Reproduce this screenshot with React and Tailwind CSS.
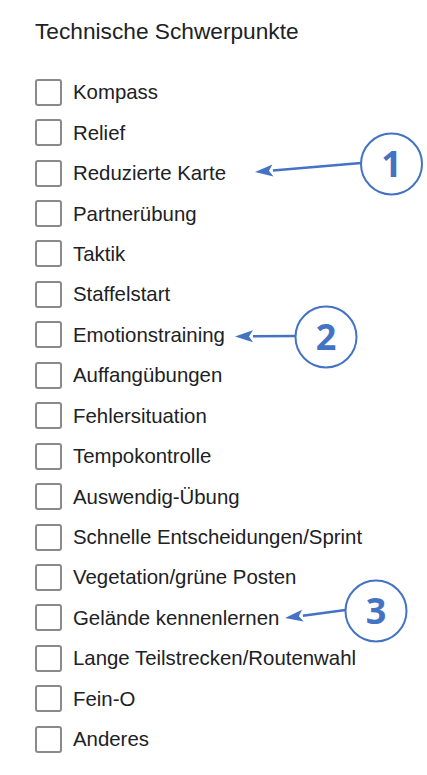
import React from "react";

const items = [
  "Kompass",
  "Relief",
  "Reduzierte Karte",
  "Partnerübung",
  "Taktik",
  "Staffelstart",
  "Emotionstraining",
  "Auffangübungen",
  "Fehlersituation",
  "Tempokontrolle",
  "Auswendig-Übung",
  "Schnelle Entscheidungen/Sprint",
  "Vegetation/grüne Posten",
  "Gelände kennenlernen",
  "Lange Teilstrecken/Routenwahl",
  "Fein-O",
  "Anderes",
];

function Callout({ cx, cy, tx, ty, label }) {
  const r = 30.5;
  const sx = cx - r;
  const sy = cy - 1;
  const dx = tx - sx;
  const dy = ty - sy;
  const len = Math.sqrt(dx * dx + dy * dy);
  const ux = dx / len;
  const uy = dy / len;
  const hl = 18;
  const hw = 6;
  const bx = tx - ux * hl;
  const by = ty - uy * hl;
  const px = -uy;
  const py = ux;
  return (
    <g>
      <line x1={sx} y1={sy} x2={bx} y2={by} stroke="#4472C4" strokeWidth="2.5" />
      <polygon
        points={`${tx},${ty} ${bx + px * hw},${by + py * hw} ${bx + ux * 4},${by + uy * 4} ${bx - px * hw},${by - py * hw}`}
        fill="#4472C4"
      />
      <circle cx={cx} cy={cy} r={r} fill="white" stroke="#4472C4" strokeWidth="2" />
      <text
        x={cx}
        y={cy + 13}
        textAnchor="middle"
        fill="#4472C4"
        fontFamily="'Open Sans', 'Liberation Sans', sans-serif"
        fontWeight="700"
        fontSize="36"
      >
        {label}
      </text>
    </g>
  );
}

export default function App() {
  return (
    <div className="relative w-[427px] h-[775px] bg-white overflow-hidden" style={{ fontFamily: "'Liberation Sans', Arial, sans-serif" }}>
      <div className="pl-[35px]">
        <div className="h-[72px] pt-[19px] text-[22.7px] leading-[24px] text-[#202124]">
          Technische Schwerpunkte
        </div>
        <div className="flex flex-col">
          {items.map((t) => (
            <div key={t} className="flex items-center h-[40.44px]">
              <div className="w-[27px] h-[27px] border-2 border-[#8a8a8a] rounded-[3px] shrink-0" />
              <span className="ml-[11px] text-[20.4px] leading-[24px] text-[#202124]">{t}</span>
            </div>
          ))}
        </div>
      </div>
      <svg className="absolute inset-0 pointer-events-none" width="427" height="775" viewBox="0 0 427 775">
        <Callout cx={391.5} cy={164} tx={255} ty={172} label="1" />
        <Callout cx={326} cy={337} tx={235} ty={336.5} label="2" />
        <Callout cx={376} cy={611} tx={285} ty={618} label="3" />
      </svg>
    </div>
  );
}
